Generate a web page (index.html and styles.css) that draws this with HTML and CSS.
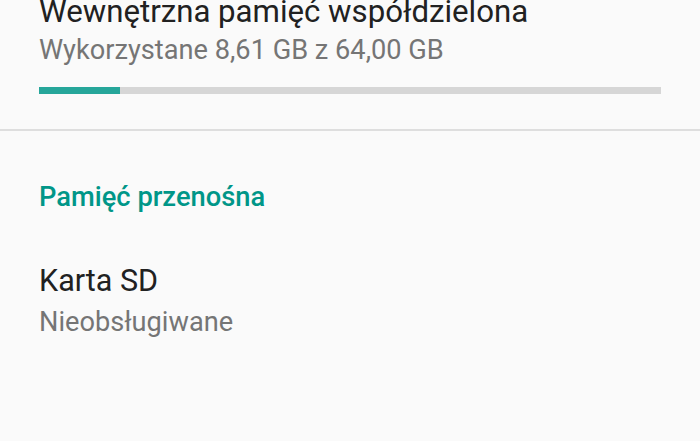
FILE: index.html
```html
<!DOCTYPE html>
<html lang="pl">
<head>
<meta charset="utf-8">
<link rel="stylesheet" href="styles.css">
</head>
<body>
<div class="screen">
  <section class="pref storage">
    <div class="title">Wewnętrzna pamięć współdzielona</div>
    <div class="summary">Wykorzystane 8,61 GB z 64,00 GB</div>
    <div class="bar"><div class="fill" style="width:13%"></div></div>
  </section>
  <div class="divider"></div>
  <div class="category">Pamięć przenośna</div>
  <section class="pref sd">
    <div class="title">Karta SD</div>
    <div class="summary">Nieobsługiwane</div>
  </section>
</div>
</body>
</html>
```
FILE: styles.css
```css
html, body {
  margin: 0;
  padding: 0;
  background: #fafafa;
}
.screen {
  width: 700px;
  height: 441px;
  overflow: hidden;
  font-family: Roboto, "Noto Sans", sans-serif;
}
.pref {
  padding: 0 39px;
}
.storage {
  margin-top: -6px;
}
.title {
  font-size: 31.2px;
  line-height: 36px;
  color: #212121;
}
.summary {
  font-size: 27.2px;
  line-height: 32px;
  color: #757575;
  margin-top: 4px;
}
.bar {
  margin-top: 21px;
  height: 7px;
  background: #d6d6d6;
  width: 622px;
}
.fill {
  height: 100%;
  background: #26a69a;
}
.divider {
  margin-top: 35px;
  height: 2px;
  background: #dedede;
}
.category {
  margin-top: 50px;
  padding: 0 39px;
  font-size: 27.3px;
  line-height: 32px;
  font-weight: 500;
  color: #009688;
}
.sd {
  margin-top: 50px;
}
.sd .title {
  font-size: 30.5px;
}
.sd .summary {
  margin-top: 7px;
}
```
